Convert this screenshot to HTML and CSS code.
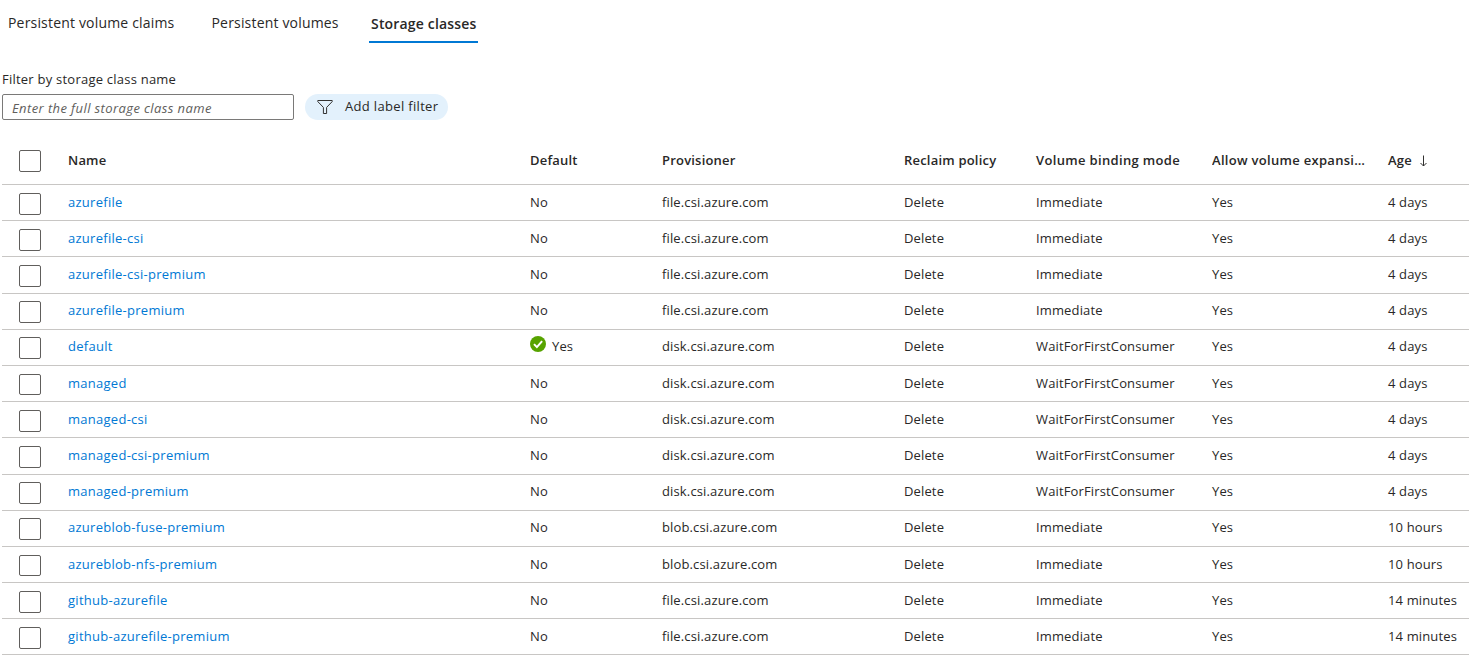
FILE: index.html
```html
<!DOCTYPE html>
<html lang="en">
<head>
<meta charset="utf-8">
<title>Storage classes</title>
<link rel="stylesheet" href="styles.css">
</head>
<body>
<nav class="tabs">
  <a class="tab tab-claims">Persistent volume claims</a>
  <a class="tab tab-volumes">Persistent volumes</a>
  <a class="tab active">Storage classes</a>
</nav>
<label class="filter-label" for="name">Filter by storage class name</label>
<div class="filters">
  <input class="name-input" id="name" type="text" placeholder="Enter the full storage class name">
  <button class="pill">
    <svg class="funnel" width="16" height="16" viewBox="0 0 16 16"><path d="M.8 1.5h14.4v1.1L9.6 8.4v6.1H6.4V8.4L.8 2.6z" fill="none" stroke="#323130" stroke-width="1"/></svg>
    <span>Add label filter</span>
  </button>
</div>
<div class="grid">
  <div class="row head"><i class="box"></i><span>Name</span><span>Default</span><span>Provisioner</span><span>Reclaim policy</span><span class="mode">Volume binding mode</span><span class="clip">Allow volume expansion</span><span class="age">Age<svg class="arrow" width="9" height="12" viewBox="0 0 9 12"><path d="M4.5.5v10.5M1.5 8l3 3 3-3" fill="none" stroke="#323130" stroke-width="1"/></svg></span></div>
  <div class="row"><i class="box"></i><a>azurefile</a><span>No</span><span>file.csi.azure.com</span><span>Delete</span><span>Immediate</span><span>Yes</span><span>4 days</span></div>
  <div class="row"><i class="box"></i><a>azurefile-csi</a><span>No</span><span>file.csi.azure.com</span><span>Delete</span><span>Immediate</span><span>Yes</span><span>4 days</span></div>
  <div class="row"><i class="box"></i><a>azurefile-csi-premium</a><span>No</span><span>file.csi.azure.com</span><span>Delete</span><span>Immediate</span><span>Yes</span><span>4 days</span></div>
  <div class="row"><i class="box"></i><a>azurefile-premium</a><span>No</span><span>file.csi.azure.com</span><span>Delete</span><span>Immediate</span><span>Yes</span><span>4 days</span></div>
  <div class="row"><i class="box"></i><a>default</a><span class="yes"><svg class="check" width="16" height="16" viewBox="0 0 16 16"><circle cx="8" cy="8" r="8" fill="#57a300"/><path d="M4 8.1l2.9 3 5.2-6" fill="none" stroke="#fff" stroke-width="2"/></svg>Yes</span><span>disk.csi.azure.com</span><span>Delete</span><span>WaitForFirstConsumer</span><span>Yes</span><span>4 days</span></div>
  <div class="row"><i class="box"></i><a>managed</a><span>No</span><span>disk.csi.azure.com</span><span>Delete</span><span>WaitForFirstConsumer</span><span>Yes</span><span>4 days</span></div>
  <div class="row"><i class="box"></i><a>managed-csi</a><span>No</span><span>disk.csi.azure.com</span><span>Delete</span><span>WaitForFirstConsumer</span><span>Yes</span><span>4 days</span></div>
  <div class="row"><i class="box"></i><a>managed-csi-premium</a><span>No</span><span>disk.csi.azure.com</span><span>Delete</span><span>WaitForFirstConsumer</span><span>Yes</span><span>4 days</span></div>
  <div class="row"><i class="box"></i><a>managed-premium</a><span>No</span><span>disk.csi.azure.com</span><span>Delete</span><span>WaitForFirstConsumer</span><span>Yes</span><span>4 days</span></div>
  <div class="row"><i class="box"></i><a>azureblob-fuse-premium</a><span>No</span><span>blob.csi.azure.com</span><span>Delete</span><span>Immediate</span><span>Yes</span><span>10 hours</span></div>
  <div class="row"><i class="box"></i><a>azureblob-nfs-premium</a><span>No</span><span>blob.csi.azure.com</span><span>Delete</span><span>Immediate</span><span>Yes</span><span>10 hours</span></div>
  <div class="row"><i class="box"></i><a>github-azurefile</a><span>No</span><span>file.csi.azure.com</span><span>Delete</span><span>Immediate</span><span>Yes</span><span>14 minutes</span></div>
  <div class="row"><i class="box"></i><a>github-azurefile-premium</a><span>No</span><span>file.csi.azure.com</span><span>Delete</span><span>Immediate</span><span>Yes</span><span>14 minutes</span></div>
</div>
</body>
</html>
```
FILE: styles.css
```css
* { box-sizing: border-box; }
body {
  margin: 0;
  height: 660px;
  overflow: hidden;
  background: #fff;
  color: #292827;
  font: 13px/18px "Open Sans", "Noto Sans", sans-serif;
}
.tabs { display: flex; height: 43px; padding-left: 8px; font-size: 14px; line-height: 20px; letter-spacing: .18px; white-space: nowrap; }
.tab { padding-top: 13px; }
.tab-claims { width: 203.5px; }
.tab-volumes { width: 157.5px; }
.tab.active { width: 109px; padding: 14px 0 0 2px; font-weight: 600; border-bottom: 2px solid #0078d4; }
.filter-label { display: block; margin: 27px 0 6px 2px; letter-spacing: .23px; }
.filters { display: flex; gap: 11px; padding-left: 2px; height: 26px; }
.name-input {
  width: 292px;
  height: 26px;
  padding: 2px 9px 0;
  border: 1px solid #7a7978;
  border-radius: 2px;
  font: inherit;
  letter-spacing: .4px;
  outline: 0;
}
.name-input::placeholder { color: #605e5c; font-style: italic; opacity: 1; }
.pill {
  display: flex;
  align-items: center;
  width: 143px;
  height: 26px;
  padding: 0 0 2px 12px;
  border: 0;
  border-radius: 13px;
  background: #e3f1fc;
  color: #292827;
  font: inherit;
  letter-spacing: .33px;
  white-space: nowrap;
}
.funnel { margin: 2px 12px 0 0; }
.grid { margin: 20px 0 0 2px; }
.row {
  display: grid;
  grid-template-columns: 49px 462px 132px 242px 132px 176px 176px 1fr;
  height: 36.19px;
  padding-left: 17px;
  border-bottom: 1px solid #c8c6c4;
  letter-spacing: .14px;
  white-space: nowrap;
}
.row > span, .row > a { padding-top: 7.7px; }
.row > a { color: #0078d4; letter-spacing: .27px; }
.box { width: 22px; height: 21.85px; margin-top: 7.7px; border: 1px solid #605e5c; border-radius: 2px; }
.head { height: 45px; font-weight: 600; letter-spacing: .2px; }
.head > span { padding-top: 11px; }
.head .box { height: 22px; margin-top: 10px; }
.head .mode { letter-spacing: .34px; }
.head .clip { width: 153px; overflow: hidden; text-overflow: ellipsis; letter-spacing: .3px; }
.arrow { margin-left: 7px; vertical-align: -2px; }
.yes { display: flex; }
.check { margin: -1px 6px 0 0; }
```
